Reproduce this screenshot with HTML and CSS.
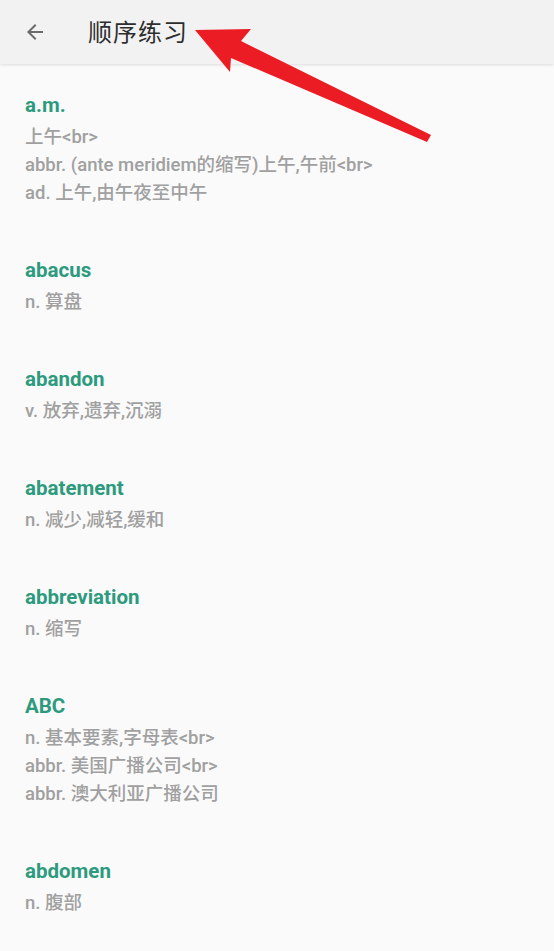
FILE: index.html
```html
<!DOCTYPE html>
<html lang="zh-CN">
<head>
  <meta charset="UTF-8">
  <meta name="viewport" content="width=device-width, initial-scale=1">
  <title>顺序练习</title>
  <link rel="stylesheet" href="styles.css">
</head>
<body>
  <header class="toolbar">
    <button class="back" aria-label="返回">
      <svg width="24" height="24" viewBox="0 0 24 24"><path d="M20 11H7.83l5.59-5.59L12 4l-8 8 8 8 1.41-1.41L7.83 13H20v-2z" fill="#6b6b6b"/></svg>
    </button>
    <h1 class="title">顺序练习</h1>
  </header>

  <ul class="words">
    <li class="item">
      <div class="word">a.m.</div>
      <div class="def">上午&lt;br&gt;<br>abbr. (ante meridiem的缩写)上午,午前&lt;br&gt;<br>ad. 上午,由午夜至中午</div>
    </li>
    <li class="item">
      <div class="word">abacus</div>
      <div class="def">n. 算盘</div>
    </li>
    <li class="item">
      <div class="word">abandon</div>
      <div class="def">v. 放弃,遗弃,沉溺</div>
    </li>
    <li class="item">
      <div class="word">abatement</div>
      <div class="def">n. 减少,减轻,缓和</div>
    </li>
    <li class="item">
      <div class="word">abbreviation</div>
      <div class="def">n. 缩写</div>
    </li>
    <li class="item">
      <div class="word">ABC</div>
      <div class="def">n. 基本要素,字母表&lt;br&gt;<br>abbr. 美国广播公司&lt;br&gt;<br>abbr. 澳大利亚广播公司</div>
    </li>
    <li class="item">
      <div class="word">abdomen</div>
      <div class="def">n. 腹部</div>
    </li>
  </ul>

  <!-- annotation arrow pointing at the title -->
  <svg class="pointer" width="554" height="160" viewBox="0 0 554 160">
    <polygon points="195,30 251,29 241,41 431,135 427,142 231,58 230,72" fill="#ec1c24"/>
  </svg>
</body>
</html>
```

FILE: styles.css
```css
body {
  margin: 0;
  background: #fafafa;
  font-family: Roboto, "Noto Sans CJK SC", sans-serif;
  height: 951px;
  overflow: hidden;
}
.toolbar {
  display: flex;
  align-items: center;
  height: 64px;
  background: #f2f2f2;
  box-shadow: 0 1px 3px rgba(0,0,0,0.12);
  position: relative;
  z-index: 1;
}
.back {
  display: flex;
  border: 0;
  background: none;
  padding: 0;
  margin: 0 0 0 23px;
  width: 24px;
  height: 24px;
}
.title {
  margin: 0 0 0 41px;
  padding-bottom: 3px;
  font-size: 24px;
  font-weight: normal;
  color: #2e2e2e;
  letter-spacing: 1px;
}
.words {
  list-style: none;
  margin: 0;
  padding: 3px 0 0;
}
.item {
  padding: 24px 25px 25px;
}
.word {
  font-size: 20.5px;
  font-weight: bold;
  line-height: 28px;
  color: #2d9a7e;
  margin-bottom: 4px;
}
.def {
  font-size: 18.5px;
  font-weight: 500;
  line-height: 28px;
  color: #a0a0a0;
}
.pointer {
  position: absolute;
  left: 0;
  top: 0;
  z-index: 2;
}
```
